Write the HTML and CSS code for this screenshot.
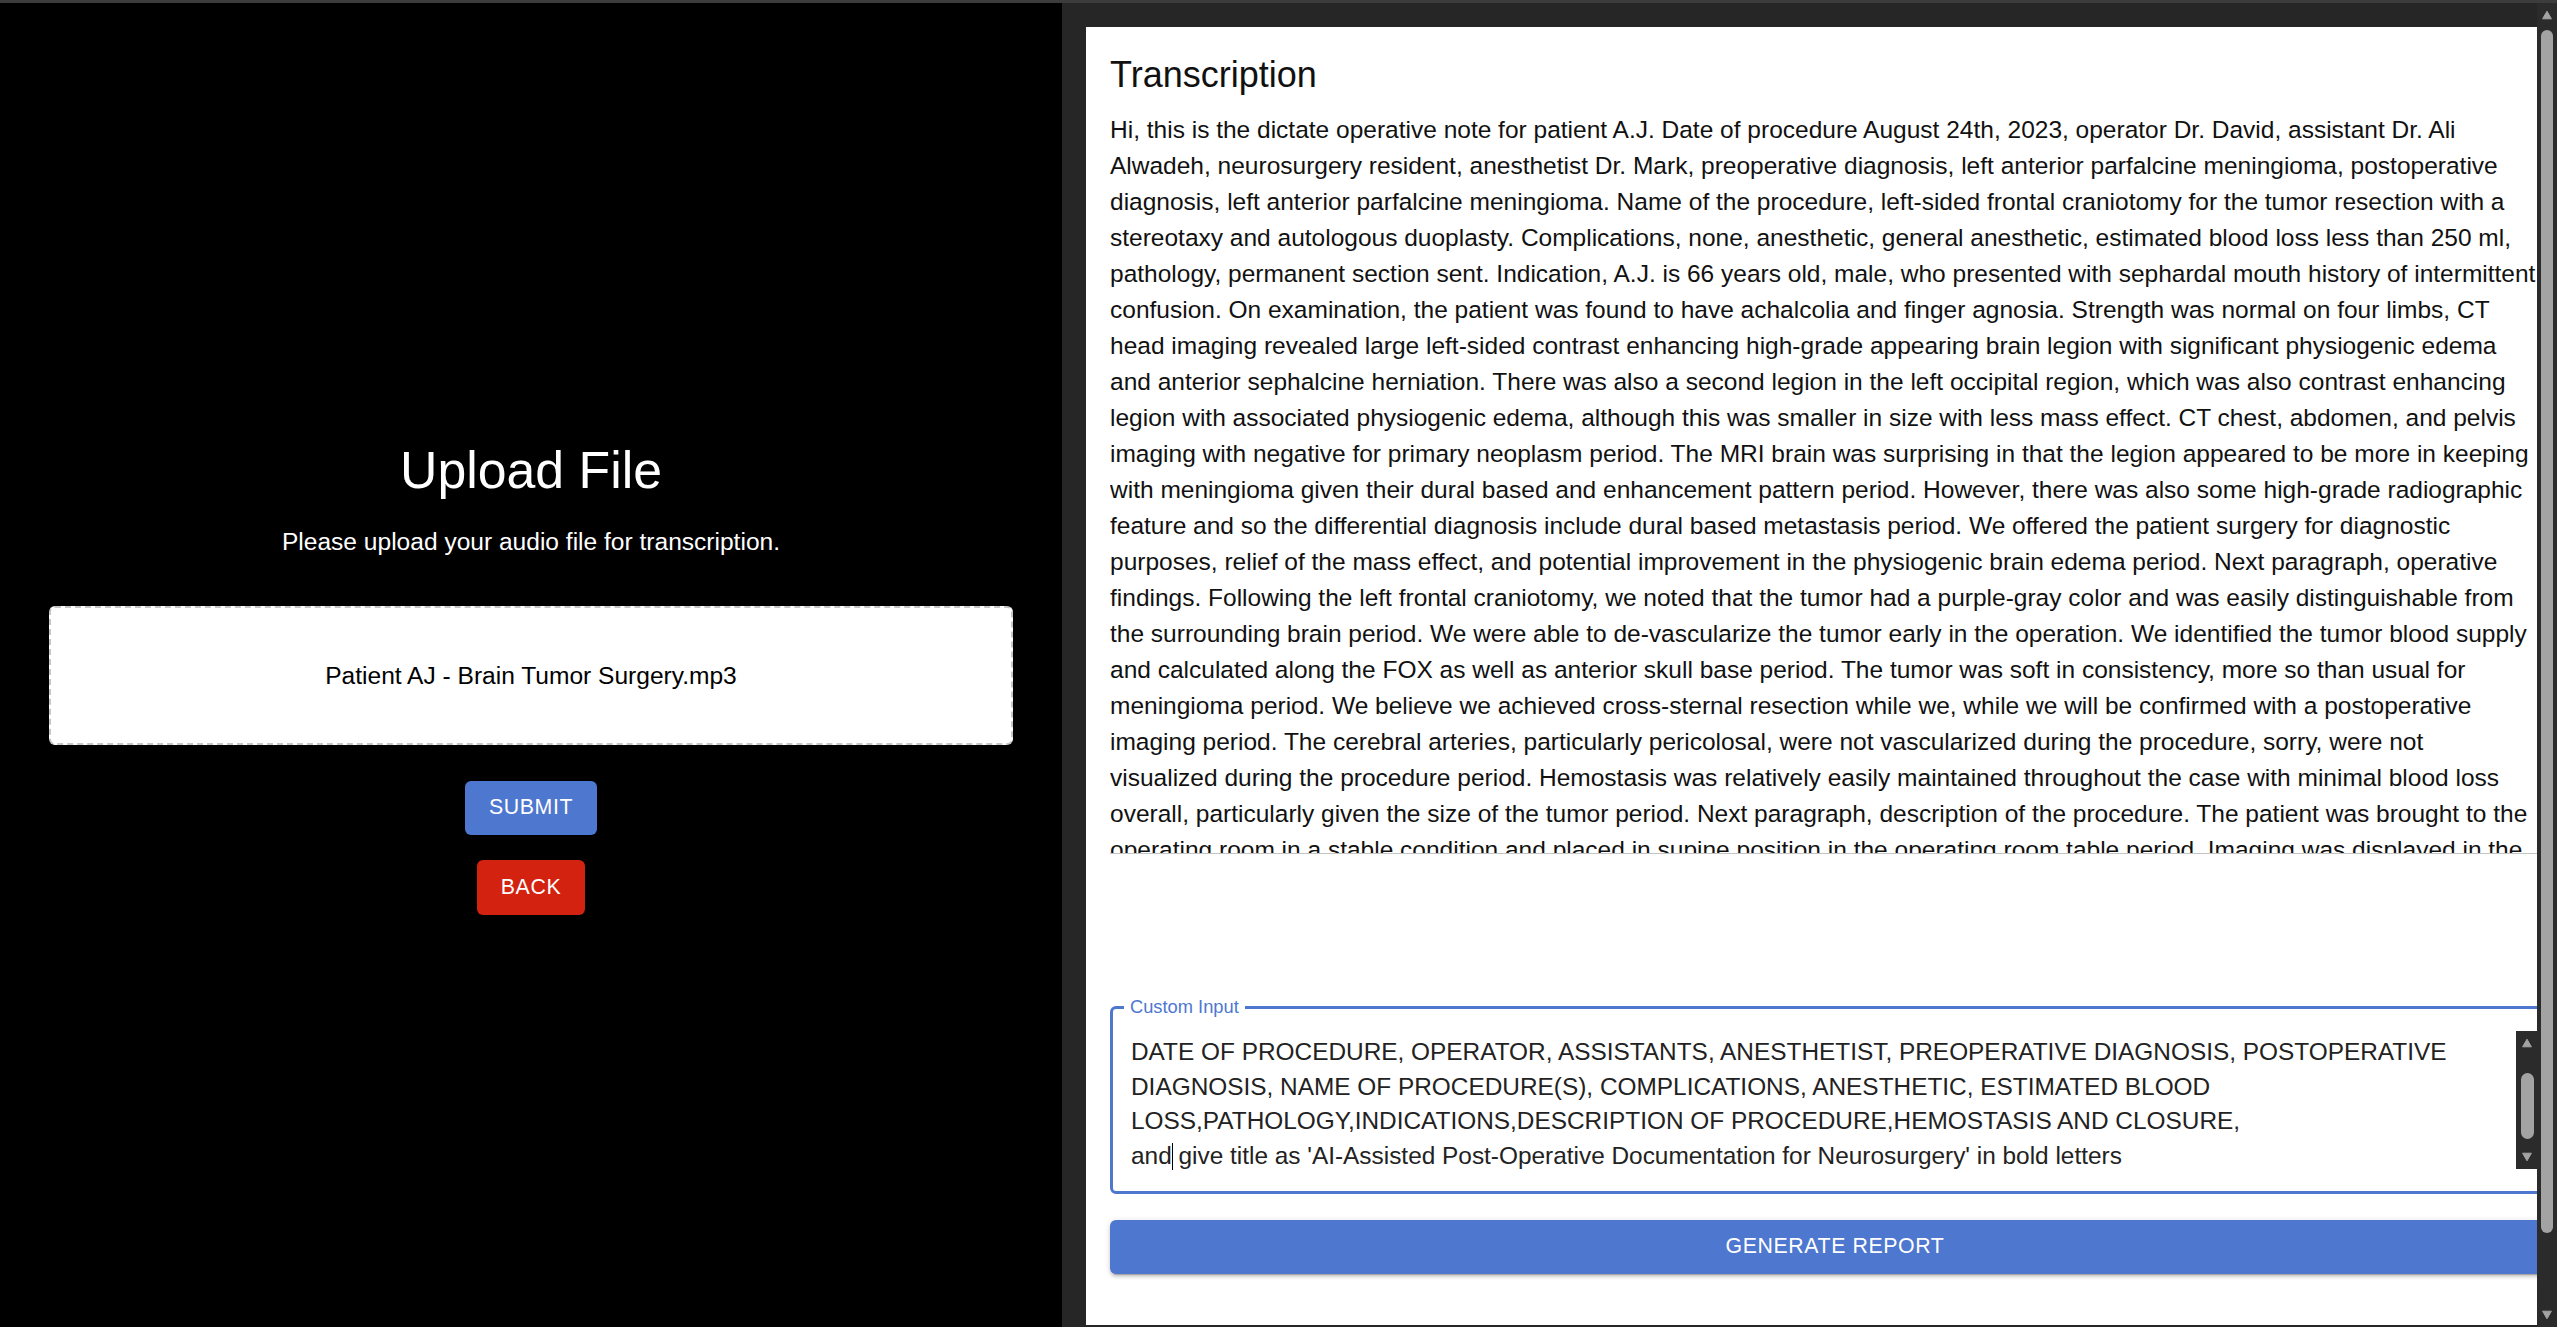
FILE: index.html
```html
<!DOCTYPE html>
<html lang="en">
<head>
<meta charset="utf-8">
<title>Transcription</title>
<link rel="stylesheet" href="styles.css">
</head>
<body>
<div class="topbar"></div>
<div class="app">
  <section class="upload">
    <h1 class="upload-title">Upload File</h1>
    <p class="upload-hint">Please upload your audio file for transcription.</p>
    <div class="dropzone"><span>Patient AJ - Brain Tumor Surgery.mp3</span></div>
    <button class="btn btn-primary">Submit</button>
    <button class="btn btn-danger">Back</button>
  </section>

  <main class="workspace">
    <div class="card">
      <h2 class="card-title">Transcription</h2>
      <div class="transcript">
        <p>Hi, this is the dictate operative note for patient A.J. Date of procedure August 24th, 2023, operator Dr. David, assistant Dr. Ali<br>
Alwadeh, neurosurgery resident, anesthetist Dr. Mark, preoperative diagnosis, left anterior parfalcine meningioma, postoperative<br>
diagnosis, left anterior parfalcine meningioma. Name of the procedure, left-sided frontal craniotomy for the tumor resection with a<br>
stereotaxy and autologous duoplasty. Complications, none, anesthetic, general anesthetic, estimated blood loss less than 250 ml,<br>
pathology, permanent section sent. Indication, A.J. is 66 years old, male, who presented with sephardal mouth history of intermittent<br>
confusion. On examination, the patient was found to have achalcolia and finger agnosia. Strength was normal on four limbs, CT<br>
head imaging revealed large left-sided contrast enhancing high-grade appearing brain legion with significant physiogenic edema<br>
and anterior sephalcine herniation. There was also a second legion in the left occipital region, which was also contrast enhancing<br>
legion with associated physiogenic edema, although this was smaller in size with less mass effect. CT chest, abdomen, and pelvis<br>
imaging with negative for primary neoplasm period. The MRI brain was surprising in that the legion appeared to be more in keeping<br>
with meningioma given their dural based and enhancement pattern period. However, there was also some high-grade radiographic<br>
feature and so the differential diagnosis include dural based metastasis period. We offered the patient surgery for diagnostic<br>
purposes, relief of the mass effect, and potential improvement in the physiogenic brain edema period. Next paragraph, operative<br>
findings. Following the left frontal craniotomy, we noted that the tumor had a purple-gray color and was easily distinguishable from<br>
the surrounding brain period. We were able to de-vascularize the tumor early in the operation. We identified the tumor blood supply<br>
and calculated along the FOX as well as anterior skull base period. The tumor was soft in consistency, more so than usual for<br>
meningioma period. We believe we achieved cross-sternal resection while we, while we will be confirmed with a postoperative<br>
imaging period. The cerebral arteries, particularly pericolosal, were not vascularized during the procedure, sorry, were not<br>
visualized during the procedure period. Hemostasis was relatively easily maintained throughout the case with minimal blood loss<br>
overall, particularly given the size of the tumor period. Next paragraph, description of the procedure. The patient was brought to the<br>
operating room in a stable condition and placed in supine position in the operating room table period. Imaging was displayed in the<br>
operating room and the head was fixed in the pins period.</p>
      </div>

      <div class="field">
        <span class="field-label">Custom Input</span>
        <div class="field-body">
          <div class="field-text">DATE OF PROCEDURE, OPERATOR, ASSISTANTS, ANESTHETIST, PREOPERATIVE DIAGNOSIS, POSTOPERATIVE DIAGNOSIS, NAME OF PROCEDURE(S), COMPLICATIONS, ANESTHETIC, ESTIMATED BLOOD LOSS,PATHOLOGY,INDICATIONS,DESCRIPTION OF PROCEDURE,HEMOSTASIS AND CLOSURE,
and<span class="caret"></span> give title as 'AI-Assisted Post-Operative Documentation for Neurosurgery' in bold letters</div>
          <div class="mini-scroll">
            <svg class="arrow" viewBox="0 0 10 10"><path d="M5 1.2 L9.4 8.8 H0.6 Z" fill="#a3a3a3" stroke="#a3a3a3" stroke-linejoin="round" stroke-width="1"/></svg>
            <div class="mini-thumb"></div>
            <svg class="arrow arrow-down" viewBox="0 0 10 10"><path d="M5 8.8 L9.4 1.2 H0.6 Z" fill="#a3a3a3" stroke="#a3a3a3" stroke-linejoin="round" stroke-width="1"/></svg>
          </div>
        </div>
      </div>

      <button class="btn btn-primary btn-block">Generate Report</button>
    </div>
  </main>

  <div class="page-scroll">
    <svg class="arrow" viewBox="0 0 10 10"><path d="M5 1.2 L9.4 8.8 H0.6 Z" fill="#a3a3a3" stroke="#a3a3a3" stroke-linejoin="round" stroke-width="1"/></svg>
    <div class="page-thumb"></div>
    <svg class="arrow page-arrow-down" viewBox="0 0 10 10"><path d="M5 8.8 L9.4 1.2 H0.6 Z" fill="#a3a3a3" stroke="#a3a3a3" stroke-linejoin="round" stroke-width="1"/></svg>
  </div>
</div>
</body>
</html>
```

FILE: styles.css
```css
html, body {
  margin: 0;
  height: 100%;
}

body {
  background: #262626;
  font-family: "Liberation Sans", Arial, Helvetica, sans-serif;
  overflow: hidden;
}

.topbar {
  height: 3px;
  background: #3c3c3c;
}

.app {
  display: flex;
  height: 1324px;
}

/* ---------- left: upload ---------- */
.upload {
  width: 1062px;
  flex-shrink: 0;
  box-sizing: border-box;
  padding-top: 436px;
  background: #000;
  color: #fff;
  display: flex;
  flex-direction: column;
  align-items: center;
}

.upload-title {
  margin: 0;
  font-size: 51.8px;
  line-height: 63px;
  font-weight: 400;
}

.upload-hint {
  margin: 22px 0 0;
  font-size: 24.55px;
  line-height: 36px;
}

.dropzone {
  align-self: stretch;
  margin: 46px 49px 0;
  height: 139px;
  box-sizing: border-box;
  border: 2px dashed #c6c6c6;
  border-radius: 6px;
  background: #fff;
  color: #000;
  font-size: 24.55px;
  line-height: 36px;
  display: flex;
  align-items: center;
  justify-content: center;
}

.btn {
  border: 0;
  border-radius: 6px;
  height: 54px;
  padding: 0 24px;
  font-family: inherit;
  font-size: 21.3px;
  line-height: 1;
  letter-spacing: 0.6px;
  text-transform: uppercase;
  color: #fff;
  cursor: pointer;
}

.btn-primary {
  background: #4e77cf;
}

.btn-danger {
  background: #d42211;
}

.upload .btn-primary {
  margin-top: 36px;
}

.upload .btn-danger {
  margin-top: 25px;
  height: 55px;
}

/* ---------- right: workspace ---------- */
.workspace {
  flex: 1;
  min-width: 0;
  overflow: hidden;
  padding: 24px 0 0 24px;
}

.card {
  width: 1498px;
  height: 1298px;
  box-sizing: border-box;
  padding: 24px;
  background: #fff;
}

.card-title {
  margin: 0 0 12px;
  font-size: 36px;
  line-height: 48px;
  font-weight: 400;
  color: #111;
}

.transcript {
  height: 742px;
  overflow: hidden;
  padding-right: 22px;
  border-bottom: 1px solid #c4c4c4;
}

.transcript p {
  margin: 0;
  padding-top: 1px;
  white-space: nowrap;
  font-size: 24.5px;
  line-height: 36px;
  color: #111;
}

.field {
  position: relative;
  margin-top: 152px;
  height: 188px;
  box-sizing: border-box;
  border: 3px solid #4e77cf;
  border-radius: 6px;
  padding: 20px 19px 0 18px;
}

.field-label {
  position: absolute;
  top: -11px;
  left: 11px;
  padding: 0 6px;
  background: #fff;
  color: #4e77cf;
  font-size: 18.3px;
  line-height: 18px;
}

.field-body {
  display: flex;
  align-items: flex-start;
}

.field-text {
  flex: 1;
  min-width: 0;
  height: 138px;
  margin-top: 6px;
  overflow: hidden;
  white-space: pre-wrap;
  font-size: 24.4px;
  line-height: 34.5px;
  color: #222;
}

.caret {
  display: inline-block;
  width: 1px;
  height: 27px;
  margin-right: -1px;
  vertical-align: -6px;
  background: #000;
}

.mini-scroll {
  width: 22px;
  height: 138px;
  flex-shrink: 0;
  box-sizing: border-box;
  margin-top: 2px;
  padding-top: 7px;
  background: #2b2b2b;
  display: flex;
  flex-direction: column;
  align-items: center;
}

.arrow {
  width: 10px;
  height: 10px;
  flex-shrink: 0;
  display: block;
}

.mini-thumb {
  width: 13px;
  height: 66px;
  margin-top: 25px;
  border-radius: 7px;
  background: #a3a3a3;
}

.arrow-down {
  margin-top: 13px;
}

.btn-block {
  display: block;
  width: 100%;
  margin-top: 26px;
  box-shadow: 0 4px 1px -3px rgba(0, 0, 0, 0.2), 0 3px 3px 0 rgba(0, 0, 0, 0.14), 0 1px 7px 0 rgba(0, 0, 0, 0.12);
}

/* ---------- page scrollbar ---------- */
.page-scroll {
  width: 20px;
  flex-shrink: 0;
  box-sizing: border-box;
  padding-top: 7px;
  background: #2b2b2b;
  display: flex;
  flex-direction: column;
  align-items: center;
}

.page-thumb {
  width: 12px;
  height: 1203px;
  margin-top: 10px;
  border-radius: 6px;
  background: #a3a3a3;
}

.page-arrow-down {
  margin-top: 77px;
}
```
